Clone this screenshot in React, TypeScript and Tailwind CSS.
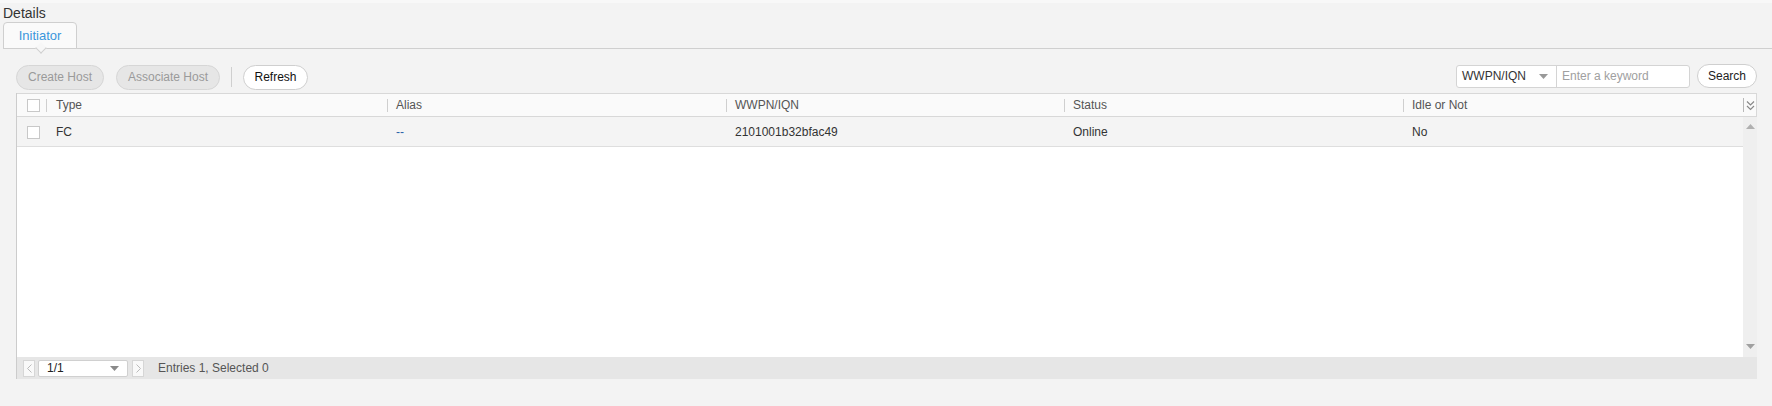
import React from "react";

const font = { fontFamily: "'Liberation Sans', Arial, sans-serif" };

function Checkbox() {
  return <div className="w-[13px] h-[13px] bg-white border border-[#c8c8c8]" />;
}

function Tri({ dir, color = "#9a9a9a" }: { dir: "up" | "down"; color?: string }) {
  return (
    <svg width="9" height="5" viewBox="0 0 9 5">
      {dir === "down" ? (
        <polygon points="0,0 9,0 4.5,5" fill={color} />
      ) : (
        <polygon points="0,5 9,5 4.5,0" fill={color} />
      )}
    </svg>
  );
}

const cols = [
  { label: "Alias", w: "w-[339px]" },
  { label: "WWPN/IQN", w: "w-[338px]" },
  { label: "Status", w: "w-[339px]" },
  { label: "Idle or Not", w: "w-[340px]" },
];

export default function App() {
  return (
    <div className="w-[1772px] h-[406px] bg-[#f3f3f3] text-[#333] overflow-hidden" style={font}>
      <div className="h-[3px] bg-[#f8f8f8]" />
      <div className="pl-[3px] pt-[2px] h-[16px] text-[14px] leading-[16px] text-[#333]">Details</div>
      {/* Tabs */}
      <div className="ml-[3px] mt-[3px] border-b border-[#cfcfcf] h-[27px] relative">
        <div className="w-[74px] h-[27px] border border-[#cfcfcf] rounded-t-[4px] bg-[#fafafa] flex items-center justify-center text-[13px] text-[#3a96dc]">
          Initiator
        </div>
        <div className="absolute left-[34px] top-[22px] w-[8px] h-[8px] bg-[#f7f7f7] border-r border-b border-[#cfcfcf] rotate-45" />
      </div>
      {/* Toolbar */}
      <div className="mt-[15px] pl-[16px] pr-[15px] h-[26px] flex items-center justify-between">
        <div className="flex items-center">
          <div className="w-[88px] h-[25px] rounded-full bg-[#e6e6e6] border border-[#d6d6d6] flex items-center justify-center text-[12px] text-[#9a9a9a]">
            Create Host
          </div>
          <div className="ml-[12px] w-[104px] h-[25px] rounded-full bg-[#e6e6e6] border border-[#d6d6d6] flex items-center justify-center text-[12px] text-[#9a9a9a]">
            Associate Host
          </div>
          <div className="ml-[11px] w-px h-[20px] bg-[#cfcfcf]" />
          <div className="ml-[11px] w-[65px] h-[25px] rounded-full bg-white border border-[#cfcfcf] flex items-center justify-center text-[12px] text-[#111]">
            Refresh
          </div>
        </div>
        <div className="flex items-center -mt-[2px]">
          <div className="flex h-[23px] bg-white border border-[#d4d4d4] rounded-[3px]">
            <div className="w-[100px] flex items-center justify-between pl-[5px] pr-[8px] border-r border-[#d4d4d4] text-[12px] text-[#333]">
              <span>WWPN/IQN</span>
              <Tri dir="down" color="#999" />
            </div>
            <div className="w-[132px] flex items-center pl-[5px] text-[12px] text-[#a0a0a0]">Enter a keyword</div>
          </div>
          <div className="ml-[7px] w-[60px] h-[24px] rounded-full bg-white border border-[#cfcfcf] flex items-center justify-center text-[12px] text-[#222]">
            Search
          </div>
        </div>
      </div>
      {/* Table */}
      <div className="mt-[3px] ml-[16px] w-[1741px] border-l border-[#cccccc] text-[12px]">
        {/* Header */}
        <div className="flex h-[24px] bg-[#fafafa] border-t border-b border-r border-[#d8d8d8]">
          <div className="w-[30px] flex items-center">
            <div className="ml-[10px]">
              <Checkbox />
            </div>
            <div className="ml-[6px] w-px h-[13px] bg-[#cfcfcf]" />
          </div>
          <div className="w-[340px] flex items-center pl-[9px] text-[#555]">Type</div>
          {cols.map((c) => (
            <div key={c.label} className={`${c.w} flex items-center text-[#555]`}>
              <div className="w-px h-[13px] bg-[#cfcfcf]" />
              <span className="pl-[8px]">{c.label}</span>
            </div>
          ))}
          <div className="flex-1 flex items-center">
            <div className="w-px h-[14px] bg-[#b8b8b8]" />
            <div className="flex-1 flex items-center justify-center">
              <svg width="9" height="11" viewBox="0 0 9 11" fill="none" stroke="#888" strokeWidth="1.2">
                <polyline points="1,1.5 4.5,5 8,1.5" />
                <polyline points="1,6 4.5,9.5 8,6" />
              </svg>
            </div>
          </div>
        </div>
        {/* Body */}
        <div className="flex h-[240px]">
          <div className="flex-1 bg-white">
            <div className="flex h-[30px] bg-[#f4f4f4] border-b border-[#dedede] items-center pt-[1px]">
              <div className="w-[30px] flex items-center">
                <div className="ml-[10px]">
                  <Checkbox />
                </div>
              </div>
              <div className="w-[340px] pl-[9px] text-[#333]">FC</div>
              <div className="w-[339px] pl-[9px] text-[#2d62a8]">--</div>
              <div className="w-[338px] pl-[9px] text-[#333]">2101001b32bfac49</div>
              <div className="w-[339px] pl-[9px] text-[#333]">Online</div>
              <div className="w-[340px] pl-[9px] text-[#333]">No</div>
            </div>
          </div>
          <div className="w-[15px] bg-[#efefef] flex flex-col items-center justify-between pt-[7px] pb-[8px]">
            <Tri dir="up" color="#b0b0b0" />
            <Tri dir="down" color="#a0a0a0" />
          </div>
        </div>
        {/* Footer */}
        <div className="h-[22px] bg-[#e6e6e6] flex items-center pl-[6px]">
          <div className="w-[12px] h-[17px] bg-[#f9f9f9] border border-[#d6d6d6] flex items-center justify-center">
            <svg width="5" height="9" viewBox="0 0 5 9" fill="none" stroke="#bbb" strokeWidth="1">
              <polyline points="4.5,0.5 0.5,4.5 4.5,8.5" />
            </svg>
          </div>
          <div className="ml-[3px] w-[90px] h-[17px] bg-white border border-[#d0d0d0] rounded-[2px] flex items-center justify-between pl-[8px] pr-[8px] text-[#222]">
            <span>1/1</span>
            <Tri dir="down" color="#8a8a8a" />
          </div>
          <div className="ml-[4px] w-[12px] h-[17px] bg-[#f9f9f9] border border-[#d6d6d6] flex items-center justify-center">
            <svg width="5" height="9" viewBox="0 0 5 9" fill="none" stroke="#bbb" strokeWidth="1">
              <polyline points="0.5,0.5 4.5,4.5 0.5,8.5" />
            </svg>
          </div>
          <span className="ml-[14px] text-[#555]">Entries 1, Selected 0</span>
        </div>
      </div>
    </div>
  );
}
